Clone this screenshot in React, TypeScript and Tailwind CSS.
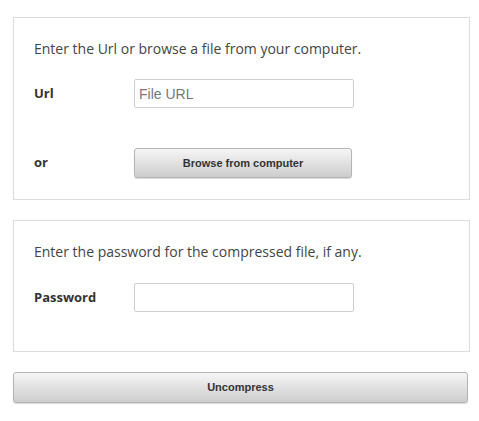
import React from 'react';

const btn =
  'rounded-[3px] border border-[#b4b4b4] bg-gradient-to-b from-[#f6f6f6] to-[#cdcdcd] text-[11px] font-bold text-[#333] shadow-[0_1px_1px_rgba(0,0,0,0.15)] font-["Liberation_Sans",Arial,sans-serif]';

const input =
  'h-[29px] w-[220px] rounded-[2px] border border-[#cfcfcf] bg-white px-[4px] text-[14px] text-[#555] placeholder-[#777] outline-none font-["Liberation_Sans",Arial,sans-serif]';

const App: React.FC = () => {
  return (
    <div className='min-h-[421px] bg-white pl-[13px] pr-[9px] pt-[17px] font-["Open_Sans",sans-serif] text-[#444]'>
      {/* Url / file */}
      <div className="border border-[#dcdcdc] px-[20px] pb-[21px] pt-[21px]">
        <p className="text-[14px] leading-[20px]">Enter the Url or browse a file from your computer.</p>
        <div className="mt-[20px] flex items-center">
          <label className="w-[100px] text-[13px] font-bold text-[#333]">Url</label>
          <input type="text" placeholder="File URL" className={input} />
        </div>
        <div className="mt-[40px] flex items-center">
          <span className="w-[100px] text-[13px] font-bold text-[#333]">or</span>
          <button className={`${btn} h-[30px] w-[218px]`}>Browse from computer</button>
        </div>
      </div>

      {/* Password */}
      <div className="mt-[20px] border border-[#dcdcdc] px-[20px] pb-[39px] pt-[21px]">
        <p className="text-[14px] leading-[20px]">Enter the password for the compressed file, if any.</p>
        <div className="mt-[21px] flex items-center">
          <label className="w-[100px] text-[13px] font-bold text-[#333]">Password</label>
          <input type="password" className={input} />
        </div>
      </div>

      <button className={`${btn} mt-[20px] h-[31px] w-[455px]`}>Uncompress</button>
    </div>
  );
};

export default App;
